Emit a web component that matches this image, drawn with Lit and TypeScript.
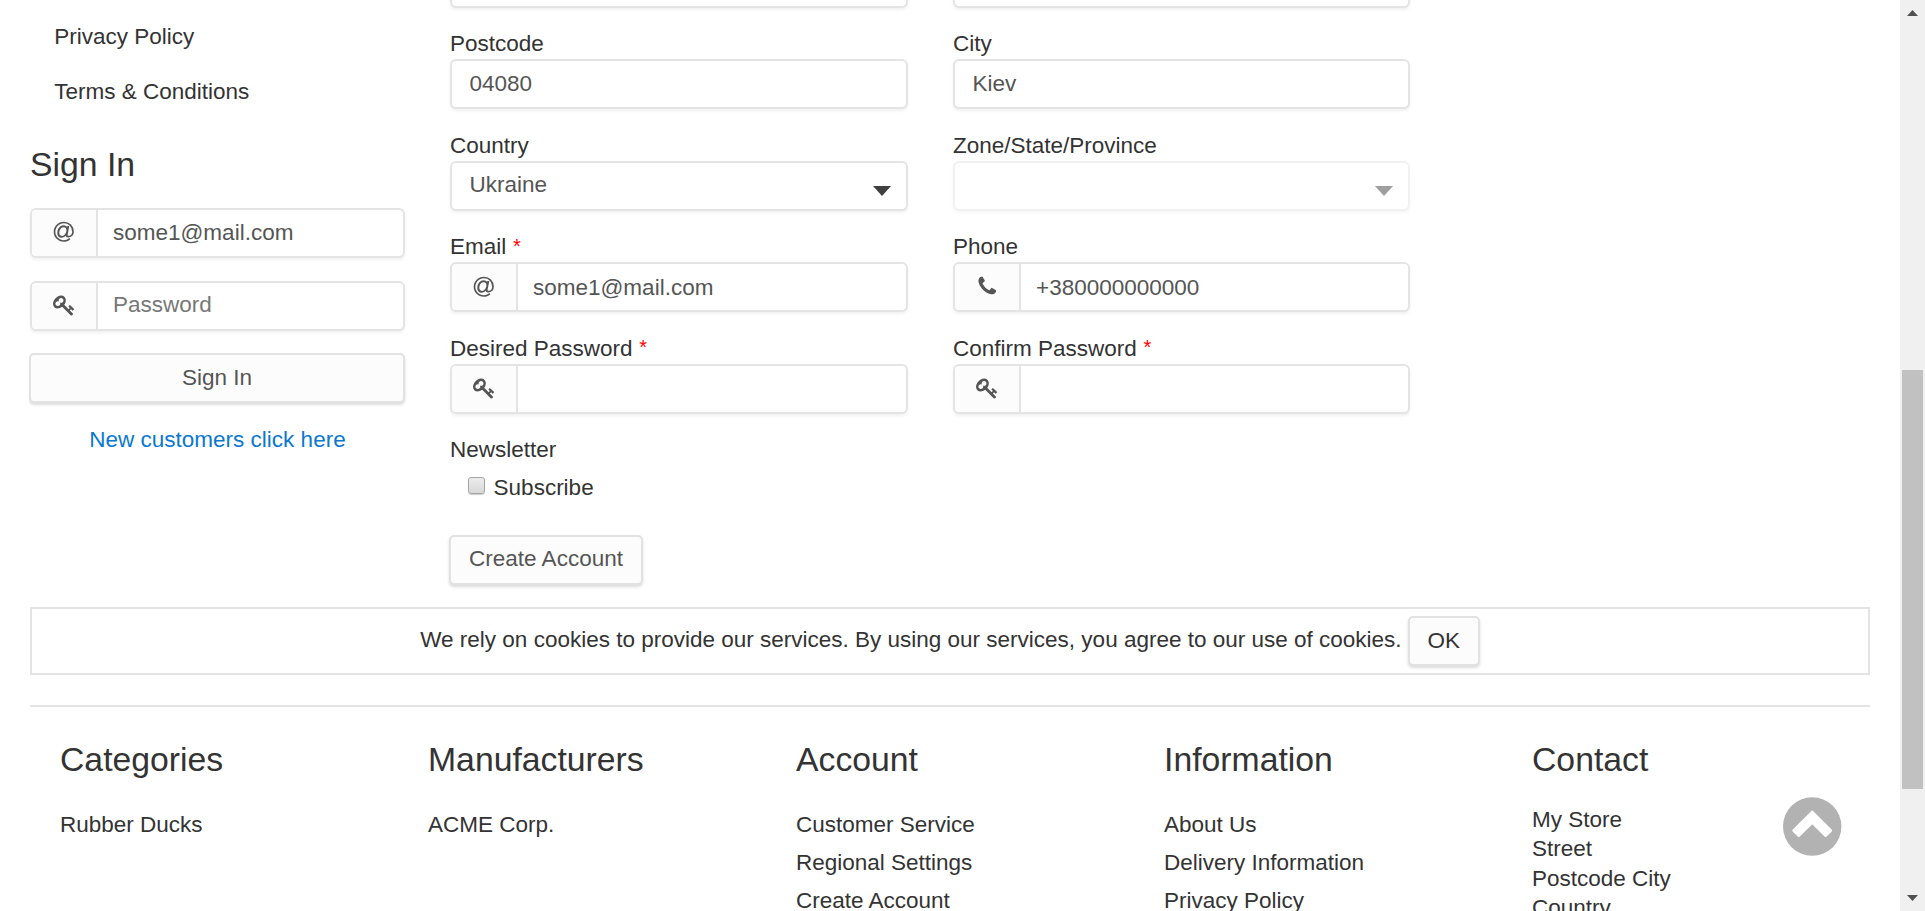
import { LitElement, html, css, svg, nothing } from "lit";
import { customElement, property } from "lit/decorators.js";

const ICONS: Record<string, unknown> = {
  at: svg`<path transform="translate(128 0)" d="M972 775q0-108-53.5-169t-147.5-61q-63 0-124 30.5t-110 84.5-79.5 137-30.5 180q0 112 53.5 173t150.5 61q96 0 176-66.5t122.5-166 42.5-203.5zm564 121q0 111-37 197t-98.5 135-131.5 74.5-145 27.5q-6 0-15.5.5t-16.5.5q-95 0-142-53-28-33-33-83-52 66-131.5 110t-173.5 44q-161 0-249.5-95.5t-88.5-269.5q0-157 66-290t179-210.5 246-77.5q87 0 155 35.5t106 99.5l2-19 11-56q1-6 5.5-12t9.5-6h118q5 0 13 11 5 5 3 16l-120 614q-5 24-5 48 0 39 12.5 52t44.5 13q28-1 57-5.5t73-24 77-50 57-89.5 24-137q0-292-174-466t-466-174q-130 0-248.5 51t-204 136.5-136.5 204-51 248.5 51 248.5 136.5 204 204 136.5 248.5 51q228 0 405-144 11-9 24-8t21 12l41 49q8 12 7 24-2 13-12 22-102 83-227.5 128t-258.5 45q-156 0-298-61t-245-164-164-245-61-298 61-298 164-245 245-164 298-61q344 0 556 212t212 556z"/>`,
  key: svg`<path d="M832 512q0-80-56-136t-136-56-136 56-56 136q0 42 19 83-41-19-83-19-80 0-136 56t-56 136 56 136 136 56 136-56 56-136q0-42-19-83 41 19 83 19 80 0 136-56t56-136zm851 704q0 17-49 66t-66 49q-9 0-28.5-16t-36.5-33-38.5-40-24.5-26l-96 96 220 220q28 28 28 68 0 42-39 81t-81 39q-40 0-68-28l-671-671q-176 131-365 131-163 0-265.5-102.5t-102.5-265.5q0-160 95-313t248-248 313-95q163 0 265.5 102.5t102.5 265.5q0 189-131 365l355 355 96-96q-3-3-26-24.5t-40-38.5-33-36.5-16-28.5q0-17 49-66t66-49q13 0 23 10 6 6 46 44.5t82 79.5 86.5 86 73 78 28.5 41z"/>`,
  phone: svg`<path d="M1600 1240q0 27-10 70.5t-21 68.5q-21 50-122 106-94 51-186 51-27 0-52.5-3.5t-57.5-12.5-47.5-14.5-55.5-20.5-49-18q-98-35-175-83-128-79-264.5-215.5t-215.5-264.5q-48-77-83-175-3-9-18-49t-20.5-55.5-14.5-47.5-12.5-57.5-3.5-52.5q0-92 51-186 56-101 106-122 25-11 68.5-21t70.5-10q14 0 21 3 18 6 53 76 11 19 30 54t35 63.5 31 53.5q3 4 17.5 25t21.5 35.5 7 28.5q0 20-28.5 50t-62 55-62 53-28.5 46q0 9 5 22.5t8.5 20.5 14 24 11.5 19q76 137 174 235t235 174q2 1 19 11.5t24 14 20.5 8.5 22.5 5q18 0 46-28.5t53-62 55-62 50-28.5q14 0 28.5 7t35.5 21.5 25 17.5q25 15 53.5 31t63.5 35 54 30q70 35 76 53 3 7 3 21z"/>`,
};

@customElement("form-box")
class FormBox extends LitElement {
  @property() icon = "";
  @property() value = "";
  @property({ type: Boolean }) placeholder = false;
  @property({ type: Boolean }) select = false;
  @property({ type: Boolean }) disabled = false;

  static styles = css`
    :host { display: block; }
    .box {
      display: flex; height: 50px; box-sizing: border-box; overflow: hidden;
      border: 2px solid #e4e4e4; border-radius: 6px; background: #fff;
      box-shadow: 0 2px 3px rgba(0, 0, 0, 0.06); color: #555;
    }
    .disabled { opacity: 0.5; }
    .addon {
      display: flex; align-items: center; justify-content: center; box-sizing: border-box;
      width: 65.5px; flex: none; background: #fcfcfc; border-right: 2px solid #e4e4e4;
      padding-bottom: 2px;
    }
    .addon svg { width: 22.5px; height: 22.5px; fill: #555; display: block; }
    .addon .at { width: 23.5px; height: 23.5px; }
    .text { flex: 1; padding: 7.6px 0 0 17.4px; line-height: 29.25px; white-space: pre; }
    .grouped { padding: 8.4px 0 0 15.5px; }
    .hint { padding-top: 7.5px; }
    .select { padding-top: 7.5px; }
    .hint { color: #777; }
    .caret { width: 18px; height: 10px; margin: 23px 15px 0 0; fill: #404040; }
  `;

  render() {
    const text = ["text", this.icon ? "grouped" : "", this.placeholder ? "hint" : "", this.select ? "select" : ""].join(" ");
    return html`<div class="box ${this.disabled ? "disabled" : ""}">
      ${this.icon
        ? html`<div class="addon"><svg class=${this.icon} viewBox="0 0 1792 1792">${ICONS[this.icon]}</svg></div>`
        : nothing}
      <div class=${text}>${this.value}</div>
      ${this.select ? html`<svg class="caret" viewBox="0 0 18 10"><path d="M0 0H18L9 10Z" /></svg>` : nothing}
    </div>`;
  }
}

interface Field {
  label: string;
  required?: boolean;
  icon?: string;
  value?: string;
  select?: boolean;
  disabled?: boolean;
}

const FIELDS: Field[] = [
  { label: "Postcode", value: "04080" },
  { label: "City", value: "Kiev" },
  { label: "Country", value: "Ukraine", select: true },
  { label: "Zone/State/Province", select: true, disabled: true },
  { label: "Email", required: true, icon: "at", value: "some1@mail.com" },
  { label: "Phone", icon: "phone", value: "+380000000000" },
  { label: "Desired Password", required: true, icon: "key" },
  { label: "Confirm Password", required: true, icon: "key" },
];

const FOOTER = [
  { title: "Categories", links: ["Rubber Ducks"] },
  { title: "Manufacturers", links: ["ACME Corp."] },
  { title: "Account", links: ["Customer Service", "Regional Settings", "Create Account"] },
  { title: "Information", links: ["About Us", "Delivery Information", "Privacy Policy"] },
];

@customElement("app-root")
class AppRoot extends LitElement {
  static styles = css`
    :host {
      display: flex; width: 1925px; height: 911px; overflow: hidden; position: relative;
      background: #fff; color: #333;
      font: 22.5px/29.25px "Liberation Sans", Arial, sans-serif;
    }
    .page { width: 1840px; padding: 0 30px; flex: none; height: 911px; overflow: hidden; }
    .columns { display: flex; height: 607px; overflow: hidden; margin-left: -1px; padding-left: 1px; gap: 45px; }
    aside { width: 375px; flex: none; }
    .nav { padding: 21.8px 0 0 24.3px; display: flex; flex-direction: column; gap: 25.75px; }
    h3 { font-weight: 400; font-size: 33.75px; line-height: 44px; margin: 0; }
    aside h3 { margin: 35.8px 0 22px; }
    .signin { display: flex; flex-direction: column; gap: 23px; }
    .button {
      display: flex; justify-content: center; box-sizing: border-box; height: 50px;
      padding: 7px 17px 0; border: 2px solid #e2e2e2; border-radius: 5px;
      background: #fcfcfc; color: #555; box-shadow: 0 2px 3px rgba(0, 0, 0, 0.14);
    }
    .signin .button { margin: -1px 0 0 -1px; padding-top: 8.6px; }
    .new { display: block; text-align: center; margin-top: 22px; color: #0b78d0; }
    .fields { width: 960px; }
    .grid { display: grid; grid-template-columns: 458px 457px; column-gap: 45px; row-gap: 22.35px; margin-top: -42.4px; }
    .label, .newsletter { height: 29.25px; line-height: 27.6px; }
    .red { color: #f00; font-size: 20px; line-height: 1; vertical-align: 1.5px; margin-left: 0.5px; }
    .newsletter { margin-top: 22.35px; }
    .check { display: flex; padding: 8.5px 0 0 18px; gap: 8.6px; line-height: 28px; height: 29.25px; }
    .tick {
      width: 17px; height: 17px; box-sizing: border-box; margin-top: 3px; border: 1px solid #a6a6a6;
      border-radius: 3px; background: linear-gradient(#ececec, #d8d8d8); box-shadow: 0 1px 1px #ccc;
    }
    .create { width: 194px; margin: 32px 0 0 -1px; padding-left: 0; padding-right: 0; }
    .cookies {
      display: flex; justify-content: center; gap: 6.2px; height: 68px; box-sizing: border-box;
      border: 2px solid #e4e4e4; padding: 7px 0 0 0;
    }
    .cookies p { margin: 8.6px 0 0; white-space: nowrap; }
    .ok { color: #333; width: 72px; padding: 7.6px 0 0; }
    footer { margin-top: 30px; border-top: 2px solid #e4e4e4; padding: 30px 0 0 30px; display: grid; grid-template-columns: repeat(5, 368px); }
    footer ul { list-style: none; margin: 28.8px 0 0; padding: 0; display: flex; flex-direction: column; gap: 8.75px; white-space: nowrap; }
    footer .address { margin: 24.4px 0 0; line-height: 29.1px; }
    .top { position: absolute; left: 1783px; top: 797px; width: 59px; height: 59px; }
    .scroll { width: 25px; flex: none; background: #f0f0f0; display: flex; flex-direction: column; align-items: center; box-sizing: border-box; padding-top: 10px; }
    .arrow { width: 11px; height: 6px; fill: #505050; display: block; }
    .thumb { width: 21px; height: 419px; margin: 354px 1px 106px 0; background: #c1c1c1; }
  `;

  render() {
    return html`
      <div class="page">
        <div class="columns">
          <aside>
            <div class="nav"><span>Privacy Policy</span><span>Terms &amp; Conditions</span></div>
            <h3>Sign In</h3>
            <div class="signin">
              <form-box icon="at" value="some1@mail.com"></form-box>
              <form-box icon="key" value="Password" placeholder></form-box>
              <div class="button">Sign In</div>
            </div>
            <a class="new">New customers click here</a>
          </aside>
          <div class="fields">
            <div class="grid">
              <form-box></form-box>
              <form-box></form-box>
              ${FIELDS.map(
                (f) => html`<div>
                  <div class="label">${f.label}${f.required ? html` <span class="red">*</span>` : nothing}</div>
                  <form-box
                    .icon=${f.icon ?? ""}
                    .value=${f.value ?? ""}
                    ?select=${f.select}
                    ?disabled=${f.disabled}
                  ></form-box>
                </div>`
              )}
            </div>
            <div class="newsletter">Newsletter</div>
            <div class="check"><span class="tick"></span><span>Subscribe</span></div>
            <div class="button create">Create Account</div>
          </div>
        </div>
        <div class="cookies">
          <p>We rely on cookies to provide our services. By using our services, you agree to our use of cookies.</p>
          <div class="button ok">OK</div>
        </div>
        <footer>
          ${FOOTER.map(
            (c) => html`<section>
              <h3>${c.title}</h3>
              <ul>${c.links.map((l) => html`<li>${l}</li>`)}</ul>
            </section>`
          )}
          <section>
            <h3>Contact</h3>
            <p class="address">My Store<br />Street<br />Postcode City<br />Country</p>
          </section>
        </footer>
      </div>
      <div class="scroll">
        <svg class="arrow" viewBox="0 0 11 6"><path d="M0 6L5.5 0L11 6Z" /></svg>
        <div class="thumb"></div>
        <svg class="arrow" viewBox="0 0 11 6"><path d="M0 0L5.5 6L11 0Z" /></svg>
      </div>
      <svg class="top" viewBox="0 0 59 59">
        <circle cx="29.2" cy="29.5" r="29.2" fill="#b2b2b2" />
        <path
          d="M29.2 15.2L10.8 33.6L15.8 38.4L29.2 25.2L42.6 38.4L47.6 33.6Z"
          fill="#fff" stroke="#fff" stroke-width="3" stroke-linejoin="round"
        />
      </svg>
    `;
  }
}
